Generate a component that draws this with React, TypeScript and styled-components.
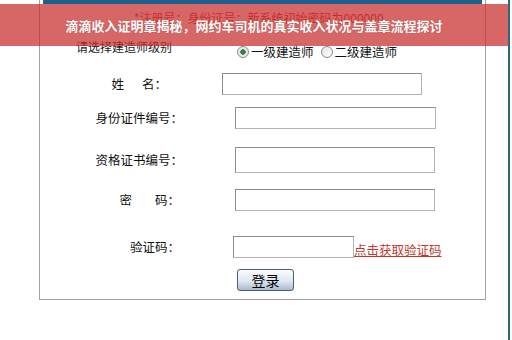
import React from 'react';
import styled, { createGlobalStyle } from 'styled-components';

const GlobalStyle = createGlobalStyle`
  html, body {
    margin: 0;
    padding: 0;
    background: #ffffff;
  }
  body {
    font-family: "Noto Sans CJK SC", "Liberation Sans", sans-serif;
    color: #111;
  }
`;

const Page = styled.div`
  position: relative;
  width: 510px;
  height: 340px;
  border-right: 2px solid #2b6b78;
  padding-left: 39px;
  box-sizing: border-box;
  overflow: hidden;
`;

const Box = styled.div`
  width: 447px;
  border: 1px solid #a2a2a2;
  border-top: none;
  box-sizing: border-box;
  padding-bottom: 8px;
`;

const TopBar = styled.div`
  height: 4px;
  margin: 0 3px;
  background: #1f5f8b;
`;

const Notice = styled.div`
  margin: 7px 0 0 94px;
  font-size: 12px;
  line-height: 14px;
  color: #c0392b;
`;

const LevelRow = styled.div`
  display: flex;
  align-items: flex-start;
  margin-top: 15px;
  height: 20px;
`;

const LevelLabel = styled.span`
  margin-left: 36px;
  font-size: 12px;
  line-height: 14px;
  color: #1a1a1a;
`;

const RadioGroup = styled.div`
  display: flex;
  align-items: center;
  margin: 5px 0 0 65px;
  font-size: 12.5px;
  line-height: 14px;
  color: #111;
`;

const RadioOption = styled.label`
  display: flex;
  align-items: center;
  gap: 2px;
  margin-right: 7px;
`;

const RadioDot = styled.span<{ checked?: boolean }>`
  width: 10px;
  height: 10px;
  border-radius: 50%;
  border: 1px solid #8a8a8a;
  background: ${p => (p.checked
    ? 'radial-gradient(circle, #3f7a4a 0 2.5px, #e6efe6 3px)'
    : 'linear-gradient(135deg, #e4e4e4, #ffffff)')};
  box-sizing: content-box;
`;

const Row = styled.div<{ top: number }>`
  display: flex;
  align-items: center;
  margin-top: ${p => p.top}px;
`;

const Label = styled.span<{ width: number }>`
  display: flex;
  justify-content: flex-end;
  width: ${p => p.width}px;
  font-size: 12.5px;
  line-height: 14px;
  color: #111;
  white-space: nowrap;
`;

const Gap = styled.span<{ size: number }>`
  display: inline-block;
  width: ${p => p.size}px;
`;

const Field = styled.div<{ offset: number; width: number; height?: number }>`
  margin-left: ${p => p.offset}px;
  width: ${p => p.width}px;
  height: ${p => p.height ?? 22}px;
  border: 1px solid #8c8c8c;
  border-right-color: #b4b4b4;
  border-bottom-color: #b4b4b4;
  background: #fff;
  box-sizing: border-box;
`;

const CodeLink = styled.a`
  margin-top: 6px;
  font-size: 12.5px;
  line-height: 14px;
  color: #c0392b;
  text-decoration: underline;
`;

const SubmitButton = styled.button`
  margin: 11px 0 0 197px;
  width: 57px;
  height: 22px;
  padding: 0;
  border: 1px solid #4e5d73;
  border-radius: 3px;
  background: linear-gradient(#fbfcfe, #dfe7f2 55%, #a9bad3);
  font-family: "Noto Sans CJK SC", sans-serif;
  font-size: 14px;
  line-height: 18px;
  color: #000;
  display: block;
`;

const Banner = styled.div`
  position: absolute;
  top: 4px;
  left: 0;
  right: 0;
  height: 42px;
  display: flex;
  align-items: center;
  justify-content: center;
  background: rgba(200, 45, 45, 0.72);
  color: #fff;
  font-size: 13px;
  font-weight: 700;
  text-shadow: 0 0 1px rgba(120, 20, 20, 0.5);
`;

export default function App() {
  return (
    <>
      <GlobalStyle />
      <Page>
        <Box>
          <TopBar />
          <Notice>*注册号：身份证号；新系统初始密码为000000</Notice>
          <LevelRow>
            <LevelLabel>请选择建造师级别</LevelLabel>
            <RadioGroup>
              <RadioOption>
                <RadioDot checked />
                一级建造师
              </RadioOption>
              <RadioOption>
                <RadioDot />
                二级建造师
              </RadioOption>
            </RadioGroup>
          </LevelRow>

          <Row top={13}>
            <Label width={127}>
              姓<Gap size={18} />名：
            </Label>
            <Field offset={55} width={200} />
          </Row>
          <Row top={12}>
            <Label width={143}>身份证件编号：</Label>
            <Field offset={52} width={201} />
          </Row>
          <Row top={18}>
            <Label width={143}>资格证书编号：</Label>
            <Field offset={52} width={200} height={26} />
          </Row>
          <Row top={16}>
            <Label width={140}>
              密<Gap size={23} />码：
            </Label>
            <Field offset={55} width={200} />
          </Row>
          <Row top={25}>
            <Label width={140}>验证码：</Label>
            <Field offset={53} width={121} />
            <CodeLink>点击获取验证码</CodeLink>
          </Row>
          <SubmitButton>登录</SubmitButton>
        </Box>
        <Banner>滴滴收入证明章揭秘，网约车司机的真实收入状况与盖章流程探讨</Banner>
      </Page>
    </>
  );
}
